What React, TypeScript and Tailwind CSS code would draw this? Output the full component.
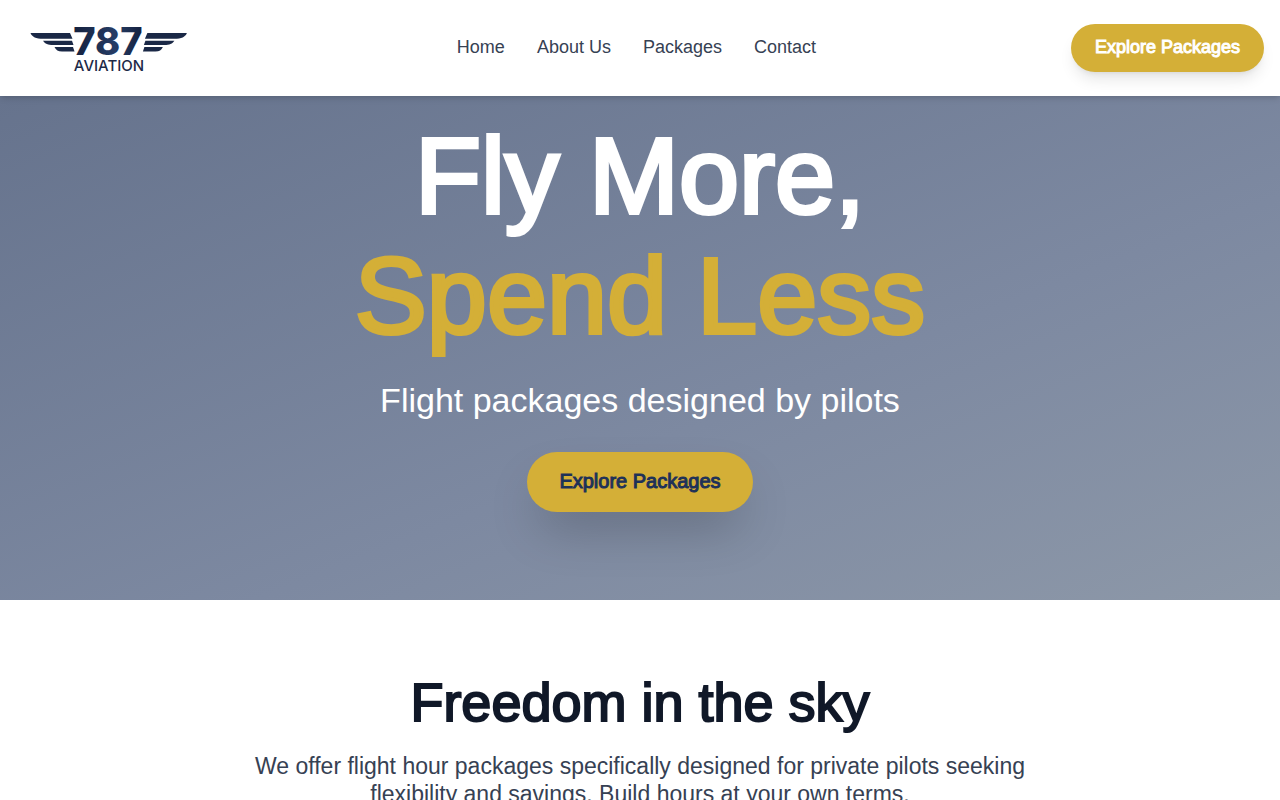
const navLinks = [
  { label: "Home", link: "#home" },
  { label: "About Us", link: "#about" },
  { label: "Packages", link: "#packages" },
  { label: "Contact", link: "#contact" },
];

const Wing = () => (
  <>
    <path d="M14.500 17H54L56.500 22.800H27C20 22.800 16 21 14.500 17Z" />
    <path d="M27 24.800H56L57.500 29H37C32 29 29 28 27 24.800Z" />
    <path d="M38.500 31H57L58.500 35.600H46C42 35.600 40 34 38.500 31Z" />
  </>
);

const Logo = () => (
  <svg viewBox="0 0 186 64" className="h-16 w-[186px]" role="img" aria-label="787 Aviation">
    <defs>
      <linearGradient id="navy" x1="0" y1="0" x2="1" y2="0">
        <stop offset="0" stopColor="#14203d" />
        <stop offset="0.6" stopColor="#263d66" />
        <stop offset="1" stopColor="#14203d" />
      </linearGradient>
    </defs>
    <g fill="#1a2846">
      <Wing />
      <g transform="translate(185.400 0) scale(-1 1)">
        <Wing />
      </g>
    </g>
    <text x="92" y="39" textAnchor="middle" fill="url(#navy)" fontSize="38" fontWeight="800" fontFamily="Inter, sans-serif">
      787
    </text>
    <text x="93" y="55" textAnchor="middle" fill="#1d2a48" fontSize="15" fontWeight="500" fontFamily="Inter, sans-serif">
      AVIATION
    </text>
  </svg>
);

const Header = () => (
  <header className="relative z-10 flex h-24 items-center justify-between bg-white px-4 shadow-md">
    <a href="#home">
      <Logo />
    </a>
    <nav className="flex gap-8 pb-0.5 text-lg text-gray-700">
      {navLinks.map((item) => (
        <a key={item.link} href={item.link}>
          {item.label}
        </a>
      ))}
    </nav>
    <button
      type="button"
      className="h-12 cursor-pointer rounded-full bg-[#d4af37] px-6 pb-0.5 text-lg text-white shadow-lg [-webkit-text-stroke:1px]"
    >
      Explore Packages
    </button>
  </header>
);

const Hero = () => (
  <section
    id="home"
    className="flex flex-col items-center bg-linear-to-br from-[#66738d] via-[#7d89a1] via-60% to-[#8d98a8] px-4 pt-5 pb-22 text-center"
  >
    <h1 className="text-[108px] leading-[120px] text-white [-webkit-text-stroke:4px]">
      Fly More,
      <span className="block text-[#d4af37]">Spend Less</span>
    </h1>
    <p className="mt-6 text-[34px] leading-10 text-white">Flight packages designed by pilots</p>
    <button
      type="button"
      className="mt-8 h-15 cursor-pointer rounded-full bg-[#d4af37] px-8 pb-0.5 text-xl text-[#1e3158] shadow-2xl [-webkit-text-stroke:1px]"
    >
      Explore Packages
    </button>
  </section>
);

const Intro = () => (
  <section id="about" className="bg-white px-4 pt-18 pb-20 text-center">
    <h2 className="text-[54px] leading-[60px] text-gray-900 [-webkit-text-stroke:2px]">Freedom in the sky</h2>
    <p className="mx-auto mt-5 max-w-[800px] text-[23px] leading-7 text-gray-700">
      We offer flight hour packages specifically designed for private pilots seeking flexibility and savings. Build
      hours at your own terms.
    </p>
  </section>
);

const App = () => {
  return (
    <div className="min-h-screen bg-white font-['Liberation_Sans',Arial,sans-serif]">
      <Header />
      <main>
        <Hero />
        <Intro />
      </main>
    </div>
  );
};

export default App;
